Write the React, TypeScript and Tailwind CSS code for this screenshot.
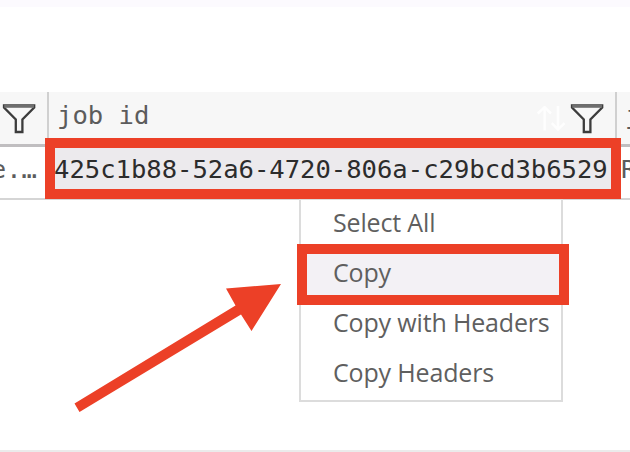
import type { ReactNode } from "react";

function FilterIcon() {
  return (
    <svg width="34" height="32" viewBox="0 0 34 32" fill="none" className="shrink-0">
      <path d="M2 2.5V4.5L13.8 16.5V29H20.4V16.5L32.2 4.5V2.5Z" stroke="#3c3c3c" strokeWidth="2.3" />
      <path d="M2.2 3H32" stroke="#6e6e6e" strokeWidth="3.6" />
    </svg>
  );
}

function SortIcon() {
  return (
    <svg width="30" height="28" viewBox="0 0 30 28" fill="none" className="shrink-0">
      <path
        d="M8.6 24.5V1.5M1.8 7.5L8.6 1.2L15 7.5M22 0V23M15.8 17.2L22 23.5L28.6 17.2"
        stroke="#fefefe"
        strokeWidth="2.5"
      />
    </svg>
  );
}

function MenuItem({ children, active = false }: { children: ReactNode; active?: boolean }) {
  return (
    <li className={`flex h-[50px] items-center pb-[7px] pl-8 ${active ? "bg-[#f3f1f5]" : ""}`}>
      <span className="whitespace-nowrap">{children}</span>
    </li>
  );
}

export default function App() {
  return (
    <div className="relative flex h-[452px] w-[630px] flex-col overflow-hidden bg-white font-['DejaVu_Sans_Mono',monospace] text-[25.55px] leading-8">
      <div className="h-[7px] shrink-0 bg-[#fcfafe]" />
      <div className="mt-[85px] flex h-[55px] shrink-0 border-b-[3px] border-[#c0bec0] bg-[#f7f7f7] text-[#5c5c5c]">
        <div className="flex w-[49px] shrink-0 border-r-2 border-[#d0d0d0] pl-0.5 pt-[11px]">
          <FilterIcon />
        </div>
        <div className="flex w-[568px] shrink-0 justify-between border-r-2 border-[#d0d0d0] pl-2">
          <span className="pt-[7px]">job id</span>
          <div className="flex pr-[11px]">
            <div className="pt-[14px]"><SortIcon /></div>
            <div className="ml-1 pt-[11px]"><FilterIcon /></div>
          </div>
        </div>
        <span className="pl-2 pt-[7px]">j</span>
      </div>
      <div className="flex h-[53px] shrink-0 items-center border-b-2 border-[#d5d5d5] text-[#5c5c5c]">
        <div className="flex w-[49px] shrink-0 justify-end overflow-hidden pb-[7px] pr-[12px]">
          <span className="whitespace-nowrap">e.…</span>
        </div>
        <div className="flex h-full w-[568px] shrink-0 bg-[#eceaed] pl-[5px] pt-[6px] text-[#2c2c2c]">
          425c1b88-52a6-4720-806a-c29bcd3b6529
        </div>
        <span className="pb-[7px] pl-1">R</span>
      </div>
      <div className="mt-auto h-[2px] shrink-0 bg-[#ebebeb]" />

      <ul className="absolute left-[299px] top-[198px] h-[204px] w-[264px] border-2 border-[#dcdcdc] bg-white font-['Open_Sans',sans-serif] text-[25px] tracking-[-0.16px] text-[#5f5f5f]">
        <MenuItem>Select All</MenuItem>
        <MenuItem active>Copy</MenuItem>
        <MenuItem>Copy with Headers</MenuItem>
        <MenuItem>Copy Headers</MenuItem>
      </ul>

      <div className="absolute left-[45px] top-[138px] h-[61px] w-[576px] border-10 border-[#ec4027]" />
      <div className="absolute left-[297px] top-[244px] h-[61px] w-[272px] border-10 border-[#ec4027]" />
      <svg className="absolute left-[60px] top-[270px]" width="230" height="150" viewBox="0 0 230 150">
        <path d="M14.5 133.5L175.5 35.5L166 18.5L221 14L191.5 61L181 44.5L19.5 142Z" fill="#ec4027" />
      </svg>
    </div>
  );
}
